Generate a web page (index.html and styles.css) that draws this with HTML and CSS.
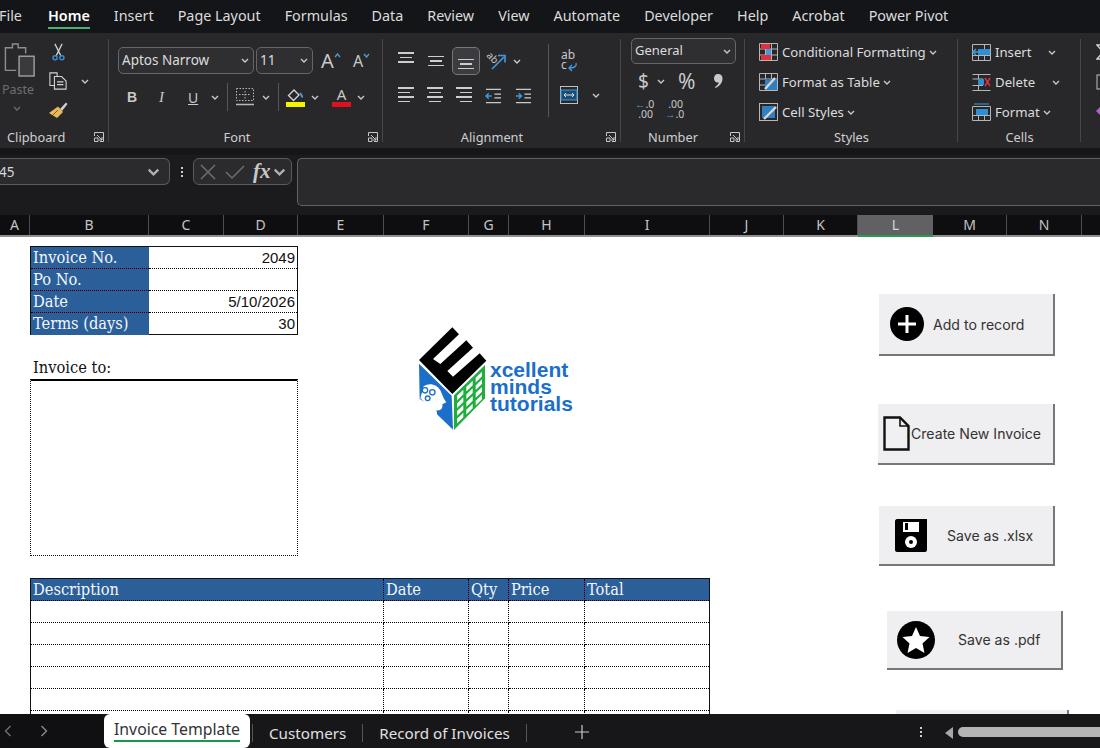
FILE: index.html
```html
<!DOCTYPE html>
<html lang="en">
<head>
    <meta charset="UTF-8">
    <title>Invoice Template - Excel</title>
    <link rel="stylesheet" href="styles.css">
</head>
<body>
    <svg class="defs" width="0" height="0">
        <defs>
            <symbol id="caret" viewBox="0 0 8 5"><polyline points="1,1 4,4 7,1" fill="none" stroke="currentColor" stroke-width="1.4"/></symbol>
            <symbol id="launcher" viewBox="0 0 10 10"><path d="M0.5 4V0.5H9.5V9.5H6M0.5 6H4V9.5H0.5ZM3 3L8 8M8 5V8H5" fill="none" stroke="#c8c8c8" stroke-width="1"/></symbol>
        </defs>
    </svg>

    <div class="app">
        <nav class="menu">
            <span class="menu-file">File</span>
            <span class="menu-item active">Home</span>
            <span class="menu-item">Insert</span>
            <span class="menu-item">Page Layout</span>
            <span class="menu-item">Formulas</span>
            <span class="menu-item">Data</span>
            <span class="menu-item">Review</span>
            <span class="menu-item">View</span>
            <span class="menu-item">Automate</span>
            <span class="menu-item">Developer</span>
            <span class="menu-item">Help</span>
            <span class="menu-item">Acrobat</span>
            <span class="menu-item">Power Pivot</span>
        </nav>

        <div class="ribbon">
            <section class="group group-clipboard">
                <div class="group-body clip-body">
                    <div class="paste">
                        <svg width="32" height="36" viewBox="0 0 34 38" fill="none" stroke="#8d8d8d" stroke-width="1.5">
                            <path d="M13 30H1.5V6H9V2H15V6H23V12"/>
                            <rect x="16" y="15" width="16" height="21" fill="#3a3a3c" stroke="#a0a0a0"/>
                        </svg>
                        <span class="paste-label">Paste</span>
                        <svg class="caret dim"><use href="#caret"/></svg>
                    </div>
                    <div class="clip-tools">
                        <svg class="scissors" width="13" height="18" viewBox="0 0 14 20" fill="none">
                            <path d="M3 1L9.5 14M11 1L4.5 14" stroke="#d0d0d0" stroke-width="1.4"/>
                            <circle cx="3.2" cy="16.5" r="2.3" stroke="#3f8fd6" stroke-width="1.5"/>
                            <circle cx="10.8" cy="16.5" r="2.3" stroke="#3f8fd6" stroke-width="1.5"/>
                        </svg>
                        <div class="icon-caret">
                            <svg width="20" height="18" viewBox="0 0 20 20" fill="none" stroke="#d4d4d4" stroke-width="1.2">
                                <path d="M8 15H1V1H9V5"/>
                                <path d="M6 5H14L19 10V19H6Z" fill="#2b2b2e"/>
                                <path d="M9 11H16M9 14H16"/>
                            </svg>
                            <svg class="caret"><use href="#caret"/></svg>
                        </div>
                        <svg width="20" height="18" viewBox="0 0 20 18" fill="none">
                            <path d="M12 8L18 1.5L19.5 3L14 10Z" fill="#d0d0d0"/>
                            <path d="M1 12L10 5.5L15 11L9 17Z" fill="#e7b95a"/>
                            <path d="M5 14L10 9" stroke="#7a5a1e"/>
                        </svg>
                    </div>
                </div>
                <div class="group-label">Clipboard<svg class="launcher"><use href="#launcher"/></svg></div>
            </section>

            <section class="group group-font">
                <div class="group-body font-body">
                    <div class="font-row">
                        <div class="select select-font">Aptos Narrow<svg class="caret"><use href="#caret"/></svg></div>
                        <div class="select select-size">11<svg class="caret"><use href="#caret"/></svg></div>
                        <span class="grow-a">A<svg width="7" height="5" viewBox="0 0 7 5"><polyline points="1,4 3.5,1 6,4" fill="none" stroke="#4a9ad8" stroke-width="1.4"/></svg></span>
                        <span class="shrink-a">A<svg width="7" height="5" viewBox="0 0 7 5"><polyline points="1,1 3.5,4 6,1" fill="none" stroke="#4a9ad8" stroke-width="1.4"/></svg></span>
                    </div>
                    <div class="format-row">
                        <span class="fmt fmt-b">B</span>
                        <span class="fmt fmt-i">I</span>
                        <span class="fmt fmt-u">U</span>
                        <svg class="caret"><use href="#caret"/></svg>
                        <span class="vsep"></span>
                        <svg class="fmt-icon" width="18" height="18" viewBox="0 0 18 18" fill="none" stroke="#b8b8b8">
                            <path d="M0.5 0.5H17.5V12.5H0.5ZM9 3V11M3 6.5H15" stroke-dasharray="1.5 1.5"/>
                            <path d="M0 16.5H18" stroke-width="1.5"/>
                        </svg>
                        <svg class="caret"><use href="#caret"/></svg>
                        <span class="vsep"></span>
                        <div class="swatch-icon">
                            <svg width="18" height="13" viewBox="0 0 18 13" fill="none">
                                <path d="M7 1L1.5 6.5L6.5 11.5L12 6Z" stroke="#d6d6d6" stroke-width="1.3"/>
                                <path d="M13 4C14.5 6 15.5 7 15 8.5" stroke="#4a9ad8" stroke-width="2"/>
                            </svg>
                            <i class="swatch yellow"></i>
                        </div>
                        <svg class="caret"><use href="#caret"/></svg>
                        <div class="swatch-icon swatch-a">
                            <span>A</span>
                            <i class="swatch red"></i>
                        </div>
                        <svg class="caret"><use href="#caret"/></svg>
                    </div>
                </div>
                <div class="group-label">Font<svg class="launcher"><use href="#launcher"/></svg></div>
            </section>

            <section class="group group-align">
                <div class="group-body align-body">
                    <div class="align-grid">
                        <div class="align-row">
                            <span class="lines l-top"><i></i><i></i><i></i></span>
                            <span class="lines l-mid"><i></i><i></i><i></i></span>
                            <span class="lines l-bottom selected"><i></i><i></i><i></i></span>
                            <svg class="orient" width="21" height="20" viewBox="0 0 21 20" fill="none">
                                <text class="orient-text" transform="translate(1 5) rotate(45)">ab</text>
                                <path d="M7 18L19 6M13 4.5H20V11.5" stroke="#3f9ade" stroke-width="1.6"/>
                            </svg>
                            <svg class="caret"><use href="#caret"/></svg>
                        </div>
                        <div class="align-row second">
                            <span class="lines l-left"><i></i><i></i><i></i><i></i></span>
                            <span class="lines l-center"><i></i><i></i><i></i><i></i></span>
                            <span class="lines l-right"><i></i><i></i><i></i><i></i></span>
                            <svg width="17" height="16" viewBox="0 0 18 16" fill="none" stroke="#c9c9c9" stroke-width="1.4">
                                <path d="M1 1H17M10 6H17M10 10H17M1 15H17"/>
                                <path d="M7 8H1M4 5L1 8L4 11" stroke="#3f9ade"/>
                            </svg>
                            <svg width="17" height="16" viewBox="0 0 18 16" fill="none" stroke="#c9c9c9" stroke-width="1.4">
                                <path d="M1 1H17M10 6H17M10 10H17M1 15H17"/>
                                <path d="M1 8H7M4 5L7 8L4 11" stroke="#3f9ade"/>
                            </svg>
                        </div>
                    </div>
                    <span class="vsep tall"></span>
                    <div class="wrap-col">
                        <svg class="wrap-icon" width="18" height="22" viewBox="0 0 18 22" fill="none">
                            <path d="M16 13C17 16 15 18 9 18M12 15L9 18L12 21" stroke="#3f9ade" stroke-width="1.4"/>
                            <text x="1" y="9" class="wrap-text">ab</text>
                            <text x="1" y="19" class="wrap-text">c</text>
                        </svg>
                        <div class="merge">
                            <svg width="18" height="18" viewBox="0 0 18 18" fill="none">
                                <rect x="0.5" y="0.5" width="17" height="17" stroke="#c0c0c0"/>
                                <rect x="1" y="4" width="16" height="10" fill="#1c4e75" stroke="#3f9ade"/>
                                <path d="M4 9H14M6 7L4 9L6 11M12 7L14 9L12 11" stroke="#e0e0e0"/>
                            </svg>
                            <svg class="caret"><use href="#caret"/></svg>
                        </div>
                    </div>
                </div>
                <div class="group-label has-launcher">Alignment<svg class="launcher"><use href="#launcher"/></svg></div>
            </section>

            <section class="group group-number">
                <div class="group-body number-body">
                    <div class="select select-number">General<svg class="caret"><use href="#caret"/></svg></div>
                    <div class="number-row">
                        <span class="num-dollar">$</span>
                        <svg class="caret"><use href="#caret"/></svg>
                        <span class="num-percent">%</span>
                        <svg width="10" height="16" viewBox="0 0 10 16"><path d="M5 1C8 1 9.5 3 9.5 5.5C9.5 9.5 7 13 2.5 15L2 14C4 12.5 5.5 11 5.8 9.5C3 10 1 8 1 5.5C1 3 2.5 1 5 1Z" fill="#c9c9c9"/></svg>
                    </div>
                    <div class="decimal-row">
                        <span class="decimal"><b class="arrow">&#8592;</b>.0<br>.00</span>
                        <span class="decimal">.00<br><b class="arrow">&#8594;</b>.0</span>
                    </div>
                </div>
                <div class="group-label has-launcher">Number<svg class="launcher"><use href="#launcher"/></svg></div>
            </section>

            <section class="group group-styles">
                <div class="group-body list-body">
                    <div class="list-row">
                        <svg width="19" height="18" viewBox="0 0 19 18" fill="none">
                            <path d="M0.5 0.5H18.5V17.5H0.5ZM6.5 0.5V17.5M12.5 0.5V17.5M0.5 6H18.5M0.5 12H18.5" stroke="#b5b5b5"/>
                            <rect x="2" y="1" width="9" height="5" fill="#e0303e"/><rect x="7" y="6" width="5" height="6" fill="#3f9ade"/><rect x="2" y="12" width="10" height="5" fill="#e0303e"/>
                        </svg>
                        Conditional Formatting<svg class="caret"><use href="#caret"/></svg>
                    </div>
                    <div class="list-row">
                        <svg width="19" height="18" viewBox="0 0 19 18" fill="none">
                            <path d="M0.5 0.5H18.5V17.5H0.5ZM6.5 0.5V17.5M12.5 0.5V17.5M0.5 6H18.5M0.5 12H18.5" stroke="#b5b5b5"/>
                            <rect x="6" y="6" width="12" height="11" fill="#2f7fc1"/><path d="M6 16L16 5" stroke="#d8d8d8" stroke-width="2.4"/>
                        </svg>
                        Format as Table<svg class="caret"><use href="#caret"/></svg>
                    </div>
                    <div class="list-row">
                        <svg width="19" height="18" viewBox="0 0 19 18" fill="none">
                            <rect x="0.5" y="0.5" width="18" height="17" stroke="#b5b5b5"/>
                            <rect x="3" y="3" width="13" height="12" fill="#2f7fc1"/><path d="M5 16L17 4" stroke="#d8d8d8" stroke-width="2.4"/>
                        </svg>
                        Cell Styles<svg class="caret"><use href="#caret"/></svg>
                    </div>
                </div>
                <div class="group-label">Styles</div>
            </section>

            <section class="group group-cells">
                <div class="group-body list-body">
                    <div class="list-row">
                        <svg width="19" height="17" viewBox="0 0 19 17" fill="none">
                            <path d="M0.5 0.5H18.5V16.5H0.5ZM0.5 11.5H18.5M6.5 11.5V16.5M12.5 11.5V16.5M12.5 0.5V5" stroke="#b5b5b5"/>
                            <rect x="6" y="5" width="12" height="6" fill="#2f8fd6"/><path d="M8 8H1M4 5L1 8L4 11" stroke="#3f9ade" stroke-width="1.5"/>
                        </svg>
                        Insert<svg class="caret far-insert"><use href="#caret"/></svg>
                    </div>
                    <div class="list-row">
                        <svg width="19" height="17" viewBox="0 0 19 17" fill="none">
                            <path d="M0.5 0.5H18.5M0.5 16.5H18.5M0.5 5H11M0.5 11.5H11M6.5 0.5V5M6.5 11.5V16.5" stroke="#b5b5b5"/>
                            <rect x="6" y="5" width="6" height="6" fill="#2f8fd6"/><path d="M13 4L18 12M18 4L13 12" stroke="#e0303e" stroke-width="1.5"/>
                        </svg>
                        Delete<svg class="caret far-delete"><use href="#caret"/></svg>
                    </div>
                    <div class="list-row">
                        <svg width="19" height="18" viewBox="0 0 19 18" fill="none">
                            <path d="M0.5 3.5H18.5V17.5H0.5ZM0.5 12.5H18.5M6.5 12.5V17.5M12.5 12.5V17.5" stroke="#b5b5b5"/>
                            <rect x="4" y="6" width="12" height="6" fill="#2f8fd6"/><path d="M2 1H17" stroke="#3f9ade"/>
                        </svg>
                        Format<svg class="caret"><use href="#caret"/></svg>
                    </div>
                </div>
                <div class="group-label">Cells</div>
            </section>

            <section class="group group-editing">
                <div class="editing-icons">
                    <svg width="12" height="16" viewBox="0 0 12 16" fill="none"><path d="M11 2V1H1L7 8L1 15H11V14" stroke="#d4d4d4" stroke-width="1.4"/></svg>
                    <svg width="14" height="16" viewBox="0 0 14 16" fill="none"><rect x="1" y="1" width="12" height="14" stroke="#c0c0c0"/></svg>
                    <svg width="14" height="14" viewBox="0 0 14 14"><path d="M0 7L6 1L12 7L6 13Z" fill="#b65ccf"/></svg>
                </div>
            </section>
        </div>

        <div class="ribbon-gap"></div>

        <div class="formula-bar">
            <div class="name-box"><span>45</span><svg class="caret big"><use href="#caret"/></svg></div>
            <span class="formula-dots"><i></i><i></i><i></i></span>
            <div class="fx-box">
                <svg width="18" height="18" viewBox="0 0 18 18" fill="none"><path d="M2 2L16 16M16 2L2 16" stroke="#6e6e70" stroke-width="1.5"/></svg>
                <svg width="20" height="16" viewBox="0 0 20 16" fill="none"><path d="M1 8L7 14L19 2" stroke="#6e6e70" stroke-width="1.5"/></svg>
                <span class="fx">fx</span>
                <svg class="caret big"><use href="#caret"/></svg>
            </div>
            <div class="formula-input"></div>
        </div>

        <div class="col-headers">
            <span class="col col-a">A</span>
            <span class="col col-b">B</span>
            <span class="col col-c">C</span>
            <span class="col col-d">D</span>
            <span class="col col-e">E</span>
            <span class="col col-f">F</span>
            <span class="col col-g">G</span>
            <span class="col col-h">H</span>
            <span class="col col-i">I</span>
            <span class="col col-j">J</span>
            <span class="col col-k">K</span>
            <span class="col col-l selected">L</span>
            <span class="col col-m">M</span>
            <span class="col col-n">N</span>
            <span class="col col-o"></span>
        </div>

        <main class="sheet">
            <div class="meta-table">
                <div class="meta-label">Invoice No.</div><div class="meta-value">2049</div>
                <div class="meta-label">Po No.</div><div class="meta-value"></div>
                <div class="meta-label">Date</div><div class="meta-value">5/10/2026</div>
                <div class="meta-label last">Terms (days)</div><div class="meta-value last">30</div>
            </div>

            <div class="invoice-to">Invoice to:</div>
            <div class="address-box"></div>

            <div class="items-table">
                <div class="item-head">Description</div><div class="item-head">Date</div><div class="item-head">Qty</div><div class="item-head">Price</div><div class="item-head">Total</div>
                <div></div><div></div><div></div><div></div><div></div>
                <div></div><div></div><div></div><div></div><div></div>
                <div></div><div></div><div></div><div></div><div></div>
                <div></div><div></div><div></div><div></div><div></div>
                <div></div><div></div><div></div><div></div><div></div>
                <div></div><div></div><div></div><div></div><div></div>
            </div>

            <div class="logo">
                <svg width="70" height="104" viewBox="58 36 210 312">
                    <path d="M58 135L158 37L178 58L100 132L122 147L200 76L220 98L143 168L160 185L240 115L260 137L158 237Z" fill="#000"/>
                    <path d="M58 146L156 242L160 344L112 298L108 280L60 252Z" fill="#1b6fc9"/>
                    <path d="M72 214C88 202 112 208 122 226C128 238 130 250 140 262L128 268C130 280 124 288 110 286L112 300L84 270L62 250Z" fill="#fff"/>
                    <circle cx="76" cy="226" r="8" fill="none" stroke="#1b6fc9" stroke-width="4"/>
                    <circle cx="98" cy="232" r="8" fill="none" stroke="#1b6fc9" stroke-width="4"/>
                    <circle cx="84" cy="250" r="7" fill="none" stroke="#1b6fc9" stroke-width="4"/>
                    <path d="M163 241L256 150V250L163 345Z" fill="#1fae3d"/>
                    <g class="logo-cells" transform="translate(163 241) skewY(-44)">
                        <rect x="9" y="10" width="19" height="14"/><rect x="37" y="10" width="19" height="14"/><rect x="65" y="10" width="19" height="14"/>
                        <rect x="9" y="33" width="19" height="14"/><rect x="37" y="33" width="19" height="14"/><rect x="65" y="33" width="19" height="14"/>
                        <rect x="9" y="56" width="19" height="14"/><rect x="37" y="56" width="19" height="14"/><rect x="65" y="56" width="19" height="14"/>
                        <rect x="9" y="79" width="19" height="14"/><rect x="37" y="79" width="19" height="14"/><rect x="65" y="79" width="19" height="14"/>
                    </g>
                </svg>
                <div class="logo-text">xcellent<br>minds<br>tutorials</div>
            </div>

            <div class="macro-btn btn-add">
                <svg width="34" height="34" viewBox="0 0 34 34"><circle cx="17" cy="17" r="17" fill="#000"/><path d="M17 8V26M8 17H26" stroke="#fff" stroke-width="3"/></svg>
                <span>Add to record</span>
            </div>
            <div class="macro-btn btn-create">
                <svg width="27" height="35" viewBox="0 0 27 35" fill="none"><path d="M1.5 1.5H17L25.5 10V33.5H1.5Z" fill="#f0eff2" stroke="#111" stroke-width="2.4"/><path d="M17 1.5V10H25.5" stroke="#111" stroke-width="1.6"/></svg>
                <span>Create New Invoice</span>
            </div>
            <div class="macro-btn btn-xlsx">
                <svg width="32" height="33" viewBox="0 0 32 33"><path d="M2 0H32V31C32 32 31 33 30 33H2C1 33 0 32 0 31V2C0 1 1 0 2 0Z" fill="#000"/><rect x="8" y="3" width="16" height="10" fill="#fff"/><rect x="10" y="4" width="3" height="7" fill="#000"/><circle cx="16" cy="23" r="6" fill="#fff"/><circle cx="16" cy="23" r="2" fill="#000"/></svg>
                <span>Save as .xlsx</span>
            </div>
            <div class="macro-btn btn-pdf">
                <svg width="38" height="38" viewBox="0 0 38 38"><circle cx="19" cy="19" r="19" fill="#000"/><path d="M19 6L23 15L32.5 16L25.5 22.5L27.5 32L19 27L10.5 32L12.5 22.5L5.5 16L15 15Z" fill="#fff"/></svg>
                <span>Save as .pdf</span>
            </div>
            <div class="macro-btn btn-cut"></div>
        </main>

        <footer class="sheet-tabs">
            <div class="tab-nav">
                <svg width="8" height="12" viewBox="0 0 8 12" fill="none"><path d="M6.5 1L1.5 6L6.5 11" stroke="#6f6f72" stroke-width="1.4"/></svg>
                <svg width="8" height="12" viewBox="0 0 8 12" fill="none"><path d="M1.5 1L6.5 6L1.5 11" stroke="#8a8a8c" stroke-width="1.4"/></svg>
            </div>
            <div class="tab active"><span>Invoice Template</span></div>
            <div class="tab tab-first">Customers</div>
            <div class="tab">Record of Invoices</div>
            <svg class="tab-add" width="14" height="14" viewBox="0 0 14 14"><path d="M7 0V14M0 7H14" stroke="#c8c8c8" stroke-width="1.2"/></svg>
            <span class="formula-dots tab-dots"><i></i><i></i><i></i></span>
            <svg class="scroll-left" width="10" height="12" viewBox="0 0 10 12"><path d="M9 0V12L1 6Z" fill="#a8a8a8"/></svg>
            <div class="scroll-thumb"></div>
        </footer>
    </div>
</body>
</html>
```

FILE: styles.css
```css
* {
    margin: 0;
    padding: 0;
    box-sizing: border-box;
}

body {
    width: 1100px;
    height: 748px;
    overflow: hidden;
    background: #111;
    font-family: "Noto Sans", "Open Sans", sans-serif;
    color: #d6d6d6;
}

.defs {
    position: absolute;
}

.app {
    width: 1100px;
    height: 748px;
    display: flex;
    flex-direction: column;
    overflow: hidden;
}

.caret {
    width: 8px;
    height: 5px;
    flex: none;
    color: #c8c8c8;
}

.caret.dim {
    color: #6b6b6b;
}

.caret.big {
    width: 13px;
    height: 8px;
    color: #b0b0b0;
}

.vsep {
    width: 1px;
    height: 28px;
    background: #55555a;
    flex: none;
}

/* top menu */
.menu {
    height: 33px;
    flex: none;
    display: flex;
    gap: 24px;
    background: #141518;
    padding: 0 0 0 48px;
    position: relative;
    font-size: 14.35px;
    line-height: 32px;
    color: #dcdcdc;
}

.menu-file {
    position: absolute;
    left: -1px;
    top: 0;
}

.menu-item.active {
    position: relative;
    color: #fff;
    font-weight: 600;
}

.menu-item.active::after {
    content: "";
    position: absolute;
    left: 0;
    right: 0;
    bottom: 4px;
    height: 2px;
    background: #4fb073;
}

/* ribbon */
.ribbon {
    height: 115px;
    flex: none;
    display: flex;
    background: #28282b;
    overflow: hidden;
}

.group {
    flex: none;
    display: flex;
    flex-direction: column;
    position: relative;
    padding-top: 5px;
}

.group::after {
    content: "";
    position: absolute;
    right: 0;
    top: 6px;
    bottom: 6px;
    width: 1px;
    background: #47474b;
}

.group-body {
    flex: 1;
    min-height: 0;
}

.group-label {
    height: 22px;
    flex: none;
    position: relative;
    text-align: center;
    font-size: 12.8px;
    line-height: 22px;
    color: #cfcfcf;
}

.group-label.has-launcher {
    padding-right: 20px;
}

.launcher {
    position: absolute;
    right: 5px;
    top: 6px;
    width: 10px;
    height: 10px;
}

.group-clipboard { width: 109px; }
.group-font { width: 274px; }
.group-align { width: 238px; }
.group-number { width: 124px; }
.group-styles { width: 213px; }
.group-cells { width: 123px; }
.group-editing { width: 19px; }
.group-editing::after { display: none; }

.group-clipboard .group-label {
    text-align: left;
    padding-left: 7px;
}

.group-font .group-label {
    padding-right: 18px;
}

/* clipboard */
.clip-body {
    display: flex;
    padding-left: 4px;
}

.paste {
    width: 41px;
    display: flex;
    flex-direction: column;
    align-items: flex-start;
    padding-top: 4px;
}

.paste-label {
    font-size: 12.5px;
    line-height: 16px;
    color: #6e6e70;
    margin-top: 4px;
    margin-left: -2px;
}

.paste .caret {
    margin: 8px 0 0 9px;
}

.clip-tools {
    display: flex;
    flex-direction: column;
    gap: 11px;
    align-items: flex-start;
    padding: 5px 0 0 3px;
}

.clip-tools .scissors {
    margin-left: 4px;
}

.icon-caret {
    display: flex;
    align-items: center;
    gap: 13px;
}

/* font */
.font-body {
    padding: 9px 0 0 9px;
}

.font-row {
    display: flex;
    align-items: center;
    height: 27px;
}

.select {
    display: flex;
    align-items: center;
    justify-content: space-between;
    height: 27px;
    border: 1px solid #66666a;
    border-radius: 5px;
    padding: 0 4px 2px 3px;
    background: #2f2f32;
    font-size: 13.5px;
    color: #dcdcdc;
}

.select .caret {
    margin-top: 2px;
}

.select-font {
    width: 136px;
}

.select-size {
    width: 57px;
    margin-left: 2px;
}

.grow-a,
.shrink-a {
    display: flex;
    align-items: flex-start;
    font-size: 20px;
    line-height: 24px;
    color: #c9c9c9;
}

.grow-a {
    margin-left: 8px;
    width: 32px;
}

.shrink-a {
    font-size: 16px;
}

.grow-a svg,
.shrink-a svg {
    margin-top: 4px;
}

.format-row {
    display: flex;
    align-items: center;
    height: 28px;
    margin-top: 9px;
    padding-left: 9px;
}

.fmt {
    width: 30px;
    text-align: left;
    padding-left: 1px;
    font-size: 14px;
    color: #c9c9c9;
}

.fmt-b { font-family: "Liberation Sans", sans-serif; font-weight: 700; padding-left: 0; }
.fmt-i { font-family: "Liberation Serif", serif; font-style: italic; font-size: 15px; padding-left: 2px; }
.fmt-u { text-decoration: underline; width: 24px; }

.format-row .vsep {
    margin: 0 7px 0 8px;
}

.fmt-icon {
    margin: 0 8px 0 1px;
}

.swatch-icon {
    width: 19px;
    height: 20px;
    display: flex;
    flex-direction: column;
    align-items: center;
    justify-content: flex-end;
    margin-right: 6px;
}

.swatch-a {
    margin-left: 13px;
    font-size: 15px;
    line-height: 15px;
    color: #c9c9c9;
}

.swatch {
    display: block;
    width: 19px;
    height: 5px;
    flex: none;
}

.yellow { background: #f3f300; }
.red { background: #e0101e; }

/* alignment */
.align-body {
    display: flex;
    padding: 9px 0 0 15px;
}

.align-grid {
    width: 150px;
}

.align-row {
    display: flex;
    align-items: center;
    height: 28px;
    gap: 10px;
}

.align-row:first-child {
    margin-left: -2px;
}

.align-row.second {
    margin-top: 8px;
    gap: 13px;
    height: 26px;
}

.lines {
    width: 20px;
    height: 28px;
    display: flex;
    flex-direction: column;
    gap: 3px;
    align-items: center;
    padding: 5px 0;
}

.lines i {
    display: block;
    height: 1.5px;
    width: 16px;
    background: #cdcdcd;
}

.lines i:nth-child(2) {
    width: 12px;
}

.l-mid { justify-content: center; }
.l-bottom { justify-content: flex-end; }

.lines.selected {
    width: 28px;
    border: 1px solid #77777b;
    border-radius: 5px;
    background: #3c3c40;
    margin: 0 -4px;
}

.align-row.second .lines {
    width: 16px;
    height: 18px;
    padding: 0;
}

.align-row.second .lines i:nth-child(4) { width: 12px; }

.l-left { align-items: flex-start !important; }
.l-right { align-items: flex-end !important; }

.orient {
    margin-left: -1px;
    overflow: visible;
}

.orient-text {
    font: 10px "Noto Sans", sans-serif;
    fill: #c9c9c9;
}

.align-row:first-child .caret {
    margin-left: -3px;
}

.tall {
    height: 73px;
    margin-top: -3px;
}

.wrap-col {
    display: flex;
    flex-direction: column;
    align-items: flex-start;
    padding: 3px 0 0 11px;
    gap: 14px;
}

.wrap-icon {
    overflow: visible;
}

.wrap-text {
    font: 12px "Noto Sans", sans-serif;
    fill: #c9c9c9;
}

.merge {
    display: flex;
    align-items: center;
    gap: 14px;
}

/* number */
.number-body {
    padding-left: 10px;
}

.select-number {
    width: 105px;
    height: 26px;
    margin-bottom: 4px;
    font-size: 13px;
}

.number-row {
    display: flex;
    align-items: center;
    height: 26px;
    padding-left: 7px;
}

.num-dollar {
    font-size: 19px;
    width: 16px;
    color: #c9c9c9;
}

.number-row .caret {
    margin: 0 13px 0 3px;
}

.num-percent {
    font-size: 21px;
    color: #c9c9c9;
    width: 35px;
}

.decimal-row {
    display: flex;
    gap: 12px;
    padding-left: 4px;
    margin-top: 5px;
}

.decimal {
    font-size: 10.5px;
    line-height: 10px;
    width: 18px;
    text-align: right;
    color: #c9c9c9;
}

.arrow {
    color: #3f9ade;
    font-weight: 700;
}

/* styles and cells */
.list-body {
    display: flex;
    flex-direction: column;
    padding: 0 0 0 14px;
    margin-top: -1px;
}

.list-row {
    height: 30px;
    flex: none;
    display: flex;
    align-items: center;
    font-size: 13.2px;
    color: #dcdcdc;
    white-space: nowrap;
}

.list-row > svg:first-child {
    margin-right: 4px;
    flex: none;
}

.list-row .caret {
    margin-left: 3px;
}

.far-insert { margin-left: 16px !important; }
.far-delete { margin-left: 17px !important; }

.editing-icons {
    display: flex;
    flex-direction: column;
    align-items: flex-start;
    gap: 14px;
    padding: 6px 0 0 15px;
}

.ribbon-gap {
    height: 7px;
    flex: none;
    background: #16161a;
}

/* formula bar */
.formula-bar {
    height: 60px;
    flex: none;
    background: #1b1b1e;
    display: flex;
    align-items: flex-start;
    padding-top: 3px;
}

.name-box {
    width: 170px;
    height: 27px;
    border: 1px solid #5a5a5e;
    border-left: none;
    border-radius: 0 6px 6px 0;
    background: #2b2b2e;
    display: flex;
    align-items: center;
    justify-content: space-between;
    padding-right: 9px;
    font-size: 13.5px;
    color: #d8d8d8;
}

.name-box span {
    margin-left: -1px;
}

.formula-dots {
    width: 23px;
    height: 27px;
    display: flex;
    flex-direction: column;
    align-items: center;
    justify-content: center;
    gap: 2px;
}

.formula-dots i {
    width: 2px;
    height: 2px;
    background: #cfcfcf;
}

.fx-box {
    width: 99px;
    height: 27px;
    border: 1px solid #5a5a5e;
    border-radius: 6px;
    background: #2b2b2e;
    display: flex;
    align-items: center;
    gap: 8px;
    padding-left: 5px;
}

.fx {
    font: italic 700 21px "Liberation Serif", serif;
    color: #c8c8c8;
}

.fx-box .caret {
    margin-left: -6px;
}

.formula-input {
    flex: 1;
    height: 48px;
    margin-left: 5px;
    border: 1px solid #626266;
    border-right: none;
    border-radius: 5px 0 0 5px;
    background: #2a2a2d;
}

/* column headers */
.col-headers {
    height: 22px;
    flex: none;
    display: flex;
    background: #0e0e11;
    border-bottom: 2px solid #8f8f8f;
}

.col {
    flex: none;
    text-align: center;
    font-size: 14px;
    line-height: 20px;
    color: #c4c4c4;
    border-right: 1px solid #4e4e52;
}

.col-a { width: 30px; }
.col-b { width: 119px; }
.col-c { width: 75px; }
.col-d { width: 74px; }
.col-e { width: 86px; }
.col-f { width: 85px; }
.col-g { width: 40px; }
.col-h { width: 76px; }
.col-i { width: 125px; }
.col-j { width: 74px; }
.col-k { width: 74px; }
.col-l { width: 75px; }
.col-m { width: 74px; }
.col-n { width: 75px; }
.col-o { flex: 1; border-right: none; }

.col.selected {
    background: #616165;
    height: 22px;
    border-right: none;
    border-bottom: 2px solid #2c9a55;
    color: #d4d4d4;
}

/* sheet */
.sheet {
    flex: 1;
    min-height: 0;
    position: relative;
    overflow: hidden;
    background: #fff;
    padding: 9px 0 0 30px;
    color: #111;
}

.meta-table {
    width: 268px;
    display: grid;
    grid-template-columns: 118px 1fr;
    grid-auto-rows: 22px;
    border: 1px solid #111;
    height: 89px;
}

.meta-label {
    background: #2a5f9a;
    color: #f4f6fa;
    font: 16.3px "DejaVu Serif Condensed", "DejaVu Serif", serif;
    line-height: 21px;
    padding-left: 2px;
    border-bottom: 1px dotted #000;
}

.meta-value {
    font: 15px "Liberation Sans", sans-serif;
    line-height: 21px;
    text-align: right;
    padding-right: 2px;
    border-bottom: 1px dotted #000;
}

.last {
    border-bottom: none;
}

.invoice-to {
    margin-top: 22px;
    padding-left: 3px;
    font: 16.3px "DejaVu Serif Condensed", "DejaVu Serif", serif;
    line-height: 22px;
    height: 22px;
}

.address-box {
    width: 268px;
    height: 177px;
    border: 1px dotted #111;
    border-top: 2px solid #000;
}

.items-table {
    width: 680px;
    margin-top: 22px;
    display: grid;
    grid-template-columns: 353px 85px 40px 76px 124px;
    grid-auto-rows: 22px;
    border: 1px solid #111;
    border-bottom: none;
}

.items-table > div {
    border-bottom: 1px dotted #000;
    border-right: 1px dotted #000;
}

.items-table > div:nth-child(5n) {
    border-right: none;
}

.items-table .item-head {
    background: #2a5f9a;
    color: #f4f6fa;
    font: 16.3px "DejaVu Serif Condensed", "DejaVu Serif", serif;
    line-height: 21px;
    padding-left: 2px;
}

/* logo floats over the cells */
.logo {
    position: absolute;
    left: 419px;
    top: 90px;
    display: flex;
}

.logo-cells rect {
    fill: #fff;
}

.logo-text {
    margin: 34px 0 0 1px;
    font: 700 21px "Liberation Sans", sans-serif;
    line-height: 17px;
    color: #1b6fc9;
}

/* macro buttons float over the cells */
.macro-btn {
    position: absolute;
    display: flex;
    align-items: center;
    background: #efeef1;
    border-right: 2px solid #77777a;
    border-bottom: 2px solid #77777a;
    font: 14.1px "Inter", sans-serif;
    color: #333;
    white-space: nowrap;
}

.btn-add {
    left: 879px;
    top: 57px;
    width: 176px;
    height: 62px;
    padding-left: 11px;
    gap: 9px;
}

.btn-create {
    left: 878px;
    top: 167px;
    width: 177px;
    height: 61px;
    padding-left: 5px;
    gap: 1px;
}

.btn-xlsx {
    left: 879px;
    top: 269px;
    width: 176px;
    height: 60px;
    padding-left: 16px;
    gap: 20px;
}

.btn-pdf {
    left: 887px;
    top: 374px;
    width: 176px;
    height: 59px;
    padding-left: 10px;
    gap: 23px;
}

.btn-cut {
    left: 896px;
    top: 473px;
    width: 173px;
    height: 60px;
}

/* sheet tabs */
.sheet-tabs {
    height: 34px;
    flex: none;
    display: flex;
    align-items: center;
    background: #17171a;
    font-size: 15.2px;
    color: #e0e0e0;
    position: relative;
}

.tab-nav {
    width: 104px;
    height: 34px;
    background: #101013;
    display: flex;
    align-items: center;
    gap: 28px;
    padding-left: 4px;
    border-top-right-radius: 6px;
}

.tab {
    height: 18px;
    line-height: 18px;
    padding: 0 16px;
    border-right: 1px solid #55555a;
    margin-top: 4px;
}

.tab-first {
    border-left: 1px solid #55555a;
}

.tab.active {
    width: 146px;
    height: 34px;
    margin: 0 2px 0 0;
    padding: 4px 0 0 10px;
    background: #fff;
    color: #333;
    border: none;
    border-radius: 6px;
    font-size: 15.8px;
}

.tab.active span {
    display: inline-block;
    line-height: 22px;
    border-bottom: 2px solid #16994a;
}

.tab-add {
    margin-left: 48px;
    margin-top: 2px;
}

.tab-dots {
    position: absolute;
    left: 909px;
    top: 4px;
}

.scroll-left {
    position: absolute;
    left: 944px;
    top: 13px;
}

.scroll-thumb {
    position: absolute;
    left: 958px;
    right: 0;
    top: 13px;
    height: 10px;
    border-radius: 5px 0 0 5px;
    background: #b4b4b4;
}
```
